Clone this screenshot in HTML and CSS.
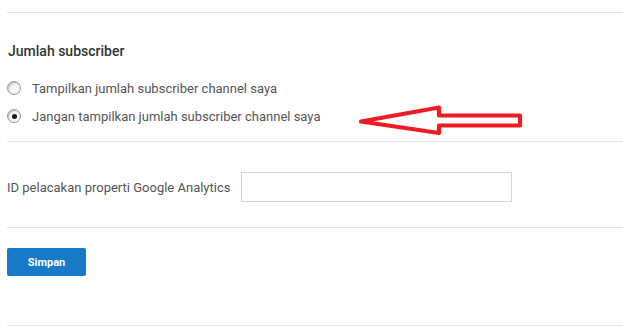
FILE: index.html
```html
<!DOCTYPE html>
<html lang="en">
<head>
  <meta charset="UTF-8" />
  <title>Setelan channel</title>
  <link rel="stylesheet" href="styles.css">
</head>
<body>
  <div class="page">
    <div class="section top"></div>

    <div class="section subscriber">
      <h3 class="title">Jumlah subscriber</h3>
      <label class="radio-row">
        <span class="radio"></span>
        Tampilkan jumlah subscriber channel saya
      </label>
      <label class="radio-row">
        <span class="radio checked"></span>
        Jangan tampilkan jumlah subscriber channel saya
      </label>
    </div>

    <div class="section analytics">
      <label class="field-label" for="gaId">ID pelacakan properti Google Analytics</label>
      <input type="text" id="gaId" class="field" />
    </div>

    <div class="section actions">
      <button class="save">Simpan</button>
    </div>

    <!-- annotation arrow -->
    <svg class="arrow" width="180" height="40" viewBox="355 100 180 40">
      <polygon points="361,121.5 439,107.5 439,115.5 520,115.5 520,125.5 439,125.5 439,133"
               fill="none" stroke="#ed1c24" stroke-width="4.2" stroke-linejoin="round" />
    </svg>
  </div>
</body>
</html>
```

FILE: styles.css
```css
body {
  margin: 0;
  background: #fff;
  font-family: Roboto, "Liberation Sans", Arial, sans-serif;
}

.page {
  position: relative;
  padding-left: 7px;
}

.section {
  border-bottom: 1px solid #e3e3e3;
}

.top {
  height: 12px;
}

.subscriber {
  padding: 28px 0 11px;
}

.title {
  margin: 0 0 13px 1px;
  font-size: 14px;
  font-weight: 500;
  line-height: 20px;
  color: #333;
}

.radio-row {
  display: flex;
  align-items: center;
  gap: 11px;
  height: 28px;
  font-size: 13px;
  color: #555;
}

.radio {
  width: 12px;
  height: 12px;
  border: 1px solid #999;
  border-radius: 50%;
  background: radial-gradient(circle at 60% 65%, #fff 0%, #f4f4f4 45%, #d4d4d4 100%);
  box-shadow: inset 1px 1px 1px rgba(0,0,0,0.15);
  display: flex;
  align-items: center;
  justify-content: center;
}

.radio.checked::after {
  content: "";
  width: 5px;
  height: 5px;
  border-radius: 50%;
  background: #111;
}

.analytics {
  display: flex;
  align-items: center;
  gap: 11px;
  padding: 30px 0 25px;
}

.field-label {
  font-size: 13px;
  color: #555;
}

.field {
  width: 257px;
  height: 28px;
  margin: 0;
  padding: 0 6px;
  box-sizing: content-box;
  border: 1px solid #d3d3d3;
  outline: none;
}

.actions {
  padding: 20px 0 49px;
}

.save {
  display: block;
  width: 79px;
  height: 28px;
  border: none;
  border-radius: 2px;
  background: #167ac6;
  color: #fff;
  font-family: Roboto, "Liberation Sans", Arial, sans-serif;
  font-size: 11px;
  font-weight: bold;
  cursor: pointer;
}

.arrow {
  position: absolute;
  left: 355px;
  top: 100px;
}
```
